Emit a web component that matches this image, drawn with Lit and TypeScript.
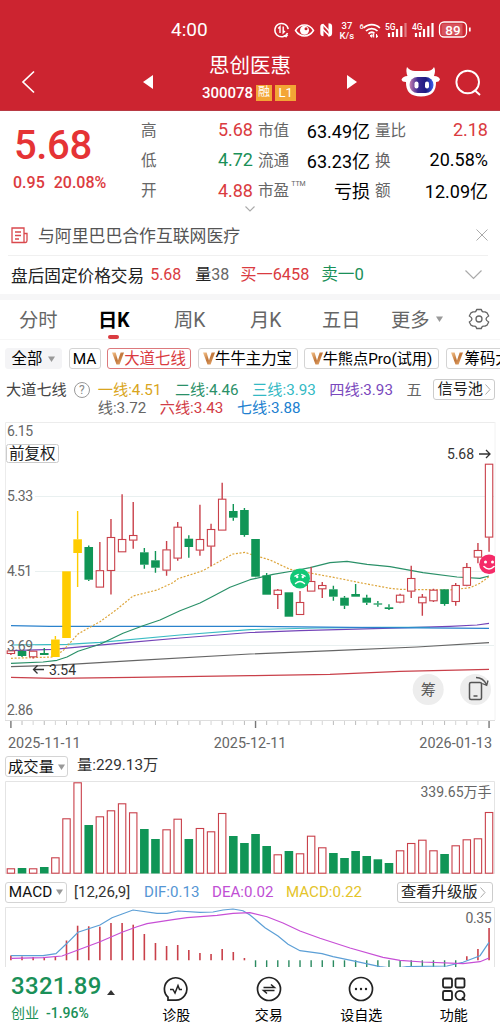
import { LitElement, html, svg, css } from "lit";
import { customElement } from "lit/decorators.js";

type Kind = "r" | "g" | "y";
// kind, body top, body bottom, high, low
type Candle = [Kind, number, number, number, number];

const X0 = 10.9;
const STEP = 11.12;
const cx = (i: number) => X0 + i * STEP;

const RED = "#c9404a";
const GREEN = "#109556";
const YELLOW = "#ffcc00";

const CANDLES: Candle[] = [
  ["r", 650.7, 653.7, 650, 655], ["g", 651, 656, 651, 657], ["r", 651, 657, 651, 658.5],
  ["g", 653, 655, 648, 655], ["y", 639.5, 657, 636, 657], ["y", 571.3, 638, 571.3, 638],
  ["y", 539.3, 553, 511, 587], ["g", 547, 579.7, 545.5, 581], ["r", 570.5, 587.3, 542, 587.3],
  ["r", 537.3, 570.7, 519, 594.5], ["r", 539.3, 552, 494.3, 552], ["r", 535.3, 540.3, 502, 548.7],
  ["g", 552.3, 564.7, 548, 568.7], ["g", 560.3, 567.7, 551, 572.7], ["r", 549.7, 570.3, 541, 575.7],
  ["r", 527, 558.3, 522, 560.7], ["g", 538.7, 547, 535.3, 557.7], ["r", 539.3, 550.3, 504.7, 555.7],
  ["r", 529.3, 546.3, 523.7, 566], ["r", 499, 530.3, 482.7, 530.3], ["g", 511, 517.7, 504, 520.7],
  ["g", 510, 535, 508, 536.7], ["g", 539, 576.7, 539, 577.3], ["g", 575.3, 594.7, 573, 594.7],
  ["r", 590, 594.7, 589, 609], ["g", 592.3, 616.7, 592.3, 616.7], ["r", 602.3, 614.7, 591, 614.7],
  ["r", 581.3, 591.3, 567, 591.3], ["r", 585.3, 589, 582, 598], ["g", 589.3, 596.7, 585.7, 600.7],
  ["g", 597.7, 605.7, 596, 609], ["g", 594, 596.7, 584, 596.7], ["g", 597.7, 602.7, 594.7, 605],
  ["g", 603.4, 604.6, 601, 606.7], ["g", 607.3, 609, 604.3, 610], ["r", 595, 602.3, 593.7, 603.3],
  ["r", 578.3, 591.3, 565.7, 598], ["r", 597, 603, 594, 615.7], ["r", 590, 601, 588.7, 602],
  ["g", 589.3, 604, 589, 605.7], ["r", 585.3, 601.7, 583, 605.7], ["r", 567.3, 585.5, 563, 586.3],
  ["r", 550.3, 557.3, 543, 563.3], ["r", 464, 537.3, 464, 551.7],
];

const VOLUME_TOPS = [
  868.3, 868, 868.3, 867, 857.3, 818.3, 782.3, 825, 816.3, 810.3, 803.3, 812.3, 829, 839, 829.3,
  818.7, 839, 828, 831.3, 813, 836, 843, 834, 846, 854.3, 851, 853.3, 835.7, 847.3, 853, 858, 851,
  856, 859.3, 863, 850.3, 843, 839.7, 850.3, 854, 845.3, 839.3, 838.3, 812,
];

const MACD_TOPS = [
  955.5, 956.5, 957, 957.5, 956.5, 940.5, 925.7, 926.3, 926.7, 923, 923, 924.7, 934, 943, 946, 945,
  950, 953, 954, 949, 952, 958,
];

const LINES: { color: string; d: string; dash?: boolean }[] = [
  { color: "#c9404a", d: "11,677.3 53,678.3 133,677.3 250,675.7 330,674.3 400,671.3 489,669.3" },
  { color: "#666", d: "11,666.7 53,665.3 133,660.7 250,654 333,650.7 417,647 489,642.7" },
  { color: "#7444b8", d: "11,650.7 53,649.3 83,646.7 127,642.7 180,638 250,632.5 300,630.7 383,628.3 450,626.3 477,625 489,623.3" },
  { color: "#3bbcc4", d: "11,645 67,644.3 100,642.3 180,635 250,629.6 317,628 383,627.3 430,627.3" },
  { color: "#2b82cc", d: "11,625.7 50,626.3 250,626.3 350,627.3 489,628.3" },
  { color: "#2a9068", d: "11,663.3 43,662 57,660.3 67,657 78,651.3 100,644.3 123,633.3 143,625.7 160,620 180,610.7 200,603 213,596.3 230,587.3 250,579.7 273,574.3 293,571 310,567.7 330,562.7 347,561.3 367,564.3 390,566.7 423,572.7 457,577 480,578.3 489,576" },
  { color: "#dda53a", dash: true, d: "11,658.3 53,657 63,650.7 78,634 100,621.7 117,609.3 133,596 157,590 173,582.7 178,578.7 203,570.7 222,560 233,554 245,552.3 250,554 270,560 290,569.3 310,573 337,578 360,582.7 390,588.3 400,589.3 450,590 470,587.7 480,583.3 489,576.7" },
];

const DIF = "11,955.7 43,955.7 56,953.7 67,943.3 78,932.3 100,925 112,917.7 133,910 157,913.3 167,913.3 178,911 200,912.3 213,912 223,910 233,909 243,910.7 250,915 265,927.7 278,936 288,944.3 300,950.7 322,953.7 333,956.7 357,961.7 380,966.7 395,968.5 407,966.5 447,966 463,962.3 480,955.7 489,942.3";
const DEA = "11,958.3 43,957.7 62,956 78,950 100,941.7 122,932.3 137,926.7 147,923.7 173,919.7 187,917.7 217,915.3 233,913.3 250,912.7 267,916.7 283,923 300,931 320,938.3 350,948 383,957.3 400,960.3 423,962 463,963.7 480,961.7 489,958";

const arrow = html`<svg class="dn" width="7" height="6" viewBox="0 0 7 6"><path d="M0 .5h7L3.5 6z" fill="#999" /></svg>`;

const vmark = html`<svg width="12" height="13" viewBox="0 0 12 13">
  <defs>
    <linearGradient id="v" x1="0" y1="0" x2="1" y2="1">
      <stop offset="0" stop-color="#f6c48c" /><stop offset=".5" stop-color="#c0763a" /><stop offset="1" stop-color="#f0b478" />
    </linearGradient>
  </defs>
  <path d="M0 .5h3.6L6 8.5 8.6.5H12L7.6 12.5H4.5z" fill="url(#v)" />
</svg>`;

@customElement("status-icons")
class StatusIcons extends LitElement {
  static styles = css`
    :host { display: block; }
    svg { display: block; }
    text { font-family: Roboto, sans-serif; fill: #fff; font-weight: 500; }
  `;
  render() {
    return html`<svg width="200" height="26" viewBox="272 16.500 200 26" fill="none" stroke="#fff">
      <path d="M287.600 32.600a6.700 6.700 0 1 1 .600-4" stroke-width="1.500" />
      <path d="M280 32.500v-6.300l-1.800 1.800M283.200 26v6.300l1.800-1.800" stroke-width="1.400" />
      <path d="M283.500 34.500h4.800l-2.200 2.800z" fill="#fff" stroke="none" />
      <path d="M295.500 30c4.500-7.200 13.500-7.200 18 0-4.500 7.200-13.500 7.200-18 0z" stroke-width="1.500" />
      <circle cx="304.500" cy="29.700" r="4.500" fill="#fff" stroke="none" />
      <circle cx="306" cy="28.200" r="1.500" fill="#cc2430" stroke="none" />
      <path d="M323.500 23.300q-3.200 0-3.200 3v6.500q0 3 3.200 3zM328.500 22.800q3.600 0 3.600 3v7q0 3-3.600 3.500z" fill="#fff" stroke="none" />
      <path d="M323 24l7 7.500v4M323 29l6.500 6.500" stroke-width="1.600" />
      <text x="341.500" y="28" font-size="9.500" stroke="none">37</text>
      <text x="339.500" y="38" font-size="9.500" stroke="none">K/s</text>
      <text x="359.500" y="28" font-size="7.500" stroke="none">6</text>
      <g stroke-width="1.700">
        <path d="M363.600 27.500a11.500 11.500 0 0 1 16.300 0" />
        <path d="M366 30.500a8 8 0 0 1 11.500 0" />
        <path d="M368.500 33.300a4.500 4.500 0 0 1 6-.4" />
      </g>
      <path d="M370 35.300l2-1 0 2.500zM373.700 37v-3.500l-1.200 1.300M376.500 33.500v3.500l1.500-1.300" stroke-width="1" fill="#fff" />
      <text x="385" y="29" font-size="8.500" stroke="none">5G</text>
      <g stroke-width="2.200">
        <path d="M389 36.500v-4M393 36.500v-5M397 36.500v-8M401.300 36.500v-11" />
        <path d="M405.500 36.500v-14" stroke="#e07c83" />
      </g>
      <text x="412" y="29" font-size="8.500" stroke="none">4G</text>
      <path d="M416 36.500v-4M420 36.500v-5M424 36.500v-8M428.300 36.500v-11M432.500 36.500v-14" stroke-width="2.200" />
      <rect x="439.500" y="21.500" width="27" height="15" rx="4.500" stroke-width="1.300" />
      <path d="M441.500 24q0-1 1-1h20v12h-20q-1 0-1-1z" fill="#e07c83" stroke="none" opacity=".55" />
      <path d="M469.800 27v4" stroke-width="1.700" />
      <text x="445.300" y="34" font-size="13.500" font-weight="700" stroke="none">89</text>
    </svg>`;
  }
}

@customElement("price-chart")
class PriceChart extends LitElement {
  static styles = css`
    :host { display: block; }
    svg { display: block; }
    text { font-family: Roboto, "Noto Sans CJK SC", sans-serif; font-size: 14px; fill: #666; }
    .dark { fill: #333; }
    .tag { font-size: 15.500px; fill: #222; }
    .chip { font-size: 15px; fill: #555; }
  `;
  render() {
    return html`<svg width="500" height="313" viewBox="0 420 500 313">
      <path d="M5.500 720.500V422.500H495" fill="none" stroke="#ececec" />
      <path d="M495 422v298" stroke="#f2f2f2" />
      <path d="M35 496.500H494M35 571.500H494M35 645.500H494" stroke="#e9f0f0" />
      <path d="M5 720.500H495" stroke="#dedede" />
      ${CANDLES.map((_, i) => {
        const major = i === 0 || i === 22 || i === 43;
        return svg`<line x1=${cx(i)} x2=${cx(i)} y1="721" y2=${major ? 728 : 725} stroke=${major ? "#777" : i % 2 ? "#bbb" : "#d5d5d5"} stroke-width=${major ? 1.4 : 1} />`;
      })}
      <rect x="6.500" y="444.500" width="52" height="18" rx="2" fill="#fff" stroke="#ccc" />
      <text class="tag" x="9" y="458.500">前复权</text>
      <text x="7" y="436" textLength="26">6.15</text>
      <text x="7" y="501" textLength="26">5.33</text>
      <text x="7" y="576" textLength="25">4.51</text>
      <text x="7" y="715" textLength="26">2.86</text>
      ${LINES.map((l) => svg`<polyline points=${l.d} fill="none" stroke=${l.color} stroke-width="1.200" stroke-linejoin="round" stroke-dasharray=${l.dash ? "2 1.600" : "none"} />`)}
      ${CANDLES.map(([k, top, bot, hi, lo], i) => {
        const x = cx(i);
        const c = k === "r" ? RED : k === "g" ? GREEN : YELLOW;
        return svg`<path d=${`M${x} ${hi}V${top}M${x} ${bot}V${lo}`} stroke=${c} stroke-width="1.400" />
          ${k === "r"
            ? svg`<rect x=${x - 3.7} y=${top + 0.2} width="7.400" height=${Math.max(bot - top - 0.4, 2)} fill="#fff" stroke=${c} stroke-width="1.100" />`
            : svg`<rect x=${x - 4.3} y=${top} width="8.600" height=${bot - top} fill=${c} />`}`;
      })}
      <text x="7" y="650.500" textLength="26">3.69</text>
      <text class="dark" x="49" y="675" textLength="27">3.54</text>
      <path d="M44 669.500H33.500M37.500 665.500l-4 4 4 4" fill="none" stroke="#333" stroke-width="1.300" />
      <text class="dark" x="447" y="459" textLength="27">5.68</text>
      <path d="M479 454h11M486 450l4 4-4 4" fill="none" stroke="#333" stroke-width="1.300" />
      <circle cx="300" cy="578.500" r="10" fill="#12c877" />
      <path d="M295 576.200l3.200-1.700M305 576.200l-3.200-1.700M295.500 583.500q4.500-4.200 9 0" fill="none" stroke="#fff" stroke-width="1.400" stroke-linecap="round" />
      <circle cx="297.200" cy="577" r="1.200" fill="#fff" /><circle cx="302.800" cy="577" r="1.200" fill="#fff" />
      <svg x="478" y="553" width="17" height="23" viewBox="478 553 17 23">
        <circle cx="489" cy="564.300" r="9.800" fill="#f52b68" />
        <circle cx="485.500" cy="562" r="1.500" fill="#fff" /><circle cx="492.500" cy="562" r="1.500" fill="#fff" />
        <path d="M484 566.500q5 5 10 0" fill="none" stroke="#fff" stroke-width="1.600" stroke-linecap="round" />
      </svg>
      <circle cx="428.200" cy="689.500" r="15.500" fill="#ededed" />
      <text class="chip" x="420.700" y="695">筹</text>
      <circle cx="475.500" cy="689.500" r="15.500" fill="#ededed" />
      <rect x="469.500" y="682.500" width="12" height="17" rx="1.500" fill="none" stroke="#555" stroke-width="1.500" />
      <path d="M473.500 696h4M476 677.500q7 0 10.500 7M488 680.500l-1.300 4.800-4.500-1.800" fill="none" stroke="#555" stroke-width="1.300" />
    </svg>`;
  }
}

@customElement("volume-chart")
class VolumeChart extends LitElement {
  static styles = css`
    :host { display: block; }
    svg { display: block; }
    text { font-family: Roboto, "Noto Sans CJK SC", sans-serif; font-size: 14px; fill: #666; }
  `;
  render() {
    return html`<svg width="500" height="95" viewBox="0 780 500 95">
      <path d="M5.500 874V781.500H494.500V874" fill="none" stroke="#e4e4e4" />
      <path d="M5 873.500H495" stroke="#f0e8e8" />
      ${VOLUME_TOPS.map((top, i) => {
        const x = cx(i);
        return CANDLES[i][0] === "g"
          ? svg`<rect x=${x - 4.3} y=${top} width="8.600" height=${873.5 - top} fill=${GREEN} />`
          : svg`<rect x=${x - 3.7} y=${top + 0.5} width="7.400" height=${872.7 - top} fill="#fff" stroke=${RED} stroke-width="1.100" />`;
      })}
      <text x="420.500" y="796.500" textLength="71">339.65万手</text>
    </svg>`;
  }
}

@customElement("macd-chart")
class MacdChart extends LitElement {
  static styles = css`
    :host { display: block; }
    svg { display: block; }
    text { font-family: Roboto, sans-serif; font-size: 14px; fill: #666; }
  `;
  render() {
    const tail: [number, number][] = [[41, 956.3], [42, 949], [43, 928]];
    return html`<svg width="500" height="61" viewBox="0 906 500 61">
      <path d="M5.500 967V907.500H494.500V967" fill="none" stroke="#e4e4e4" />
      ${MACD_TOPS.map((t, i) => svg`<line x1=${cx(i)} x2=${cx(i)} y1=${t} y2="960.300" stroke=${RED} stroke-width="1.600" />`)}
      ${tail.map(([i, t]) => svg`<line x1=${cx(i)} x2=${cx(i)} y1=${t} y2="960.300" stroke=${RED} stroke-width="1.600" />`)}
      ${Array.from({ length: 19 }, (_, k) => svg`<line x1=${cx(22 + k)} x2=${cx(22 + k)} y1="960.300" y2="967" stroke="#2a8a60" stroke-width="1.400" />`)}
      <polyline points=${DIF} fill="none" stroke="#5c9fd6" stroke-width="1.200" />
      <polyline points=${DEA} fill="none" stroke="#c74fd6" stroke-width="1.200" />
      <text x="465.500" y="922.500" textLength="26">0.35</text>
    </svg>`;
  }
}

@customElement("app-root")
class AppRoot extends LitElement {
  static styles = css`
    :host {
      display: flex; flex-direction: column; width: 500px; height: 1031px; overflow: hidden;
      background: #fff; color: #222; font-family: Roboto, "Noto Sans CJK SC", sans-serif;
      font-size: 15px; white-space: nowrap;
    }
    * { box-sizing: border-box; }
    svg { display: block; flex: none; }
    .red { color: #da3b40; } .green { color: #1a9058; } .black { color: #000; }
    .row { display: flex; align-items: center; flex: none; }

    .top { background: #cc2430; color: #fff; height: 110.500px; flex: none; border-bottom: 1px solid #b83a44; }
    .status { height: 46px; padding: 13px 0 0 171px; }
    .clock { width: 101px; font-size: 19px; }
    .bar { height: 64px; padding-left: 21px; }
    .back { margin-top: 7px; }
    .prev { margin-left: 108px; margin-top: 8px; }
    .title { width: 140px; margin-left: 27px; display: flex; flex-direction: column; align-items: center; margin-top: 2px; }
    .name { font-size: 20.500px; line-height: 28px; }
    .code { display: flex; align-items: center; gap: 3px; height: 26px; font-size: 15px; font-weight: 500; margin-left: -2px; }
    .badge { height: 15.500px; line-height: 15.500px; font-size: 12px; width: 16px; text-align: center; background: #f3a535; font-weight: 400; }
    .wide { width: 21px; font-size: 13px; }
    .next { margin-left: 27px; margin-top: 8px; }
    .bot { margin-left: 44px; margin-top: 7px; }
    .find { margin-left: 14px; margin-top: 9px; }

    .quote { height: 94px; align-items: flex-start; }
    .last { width: 141px; padding: 12px 0 0 14px; color: #e53335; }
    .price { font-size: 40px; line-height: 46px; font-weight: 500; letter-spacing: -.400px; height: 48px; }
    .chg { display: flex; gap: 9px; margin-left: -1px; font-size: 16px; line-height: 24px; font-weight: 500; color: #dc3b40; }
    .stats { display: grid; grid-template-columns: 112px 112px 113px; column-gap: 5px; grid-auto-rows: 30.300px; padding-top: 4px; }
    .cell { display: flex; justify-content: space-between; align-items: center; font-size: 18px; }
    .lab { font-size: 15.600px; color: #666; display: flex; margin-top: -2px; }
    .sup { font-size: 7px; line-height: 12px; margin-left: 2px; }
    .more { height: 8px; padding-left: 245px; }

    .news { height: 42px; padding: 3px 12px 0 11px; font-size: 16.850px; color: #555; }
    .news span { margin-left: 10px; flex: 1; margin-top: -1px; }
    .rule { height: 1px; background: #f0f0f0; margin: 0 12px 0 8px; flex: none; }
    .after { height: 38px; padding-left: 11px; font-size: 16.650px; }
    .after span { line-height: 24px; }
    .after i { font-style: normal; color: #222; }
    .after .a { margin-left: 6px; width: 45px; padding-top: 1px; font-size: 16px; } .after .b { width: 45px; color: #666; font-size: 16px; } .after .c { width: 81px; font-size: 16.300px; } .after .d { width: 144px; }
    .band { height: 6px; background: #f6f6f7; flex: none; }

    .tabs { height: 40px; color: #666; font-size: 19.300px; padding-left: 19px; border-bottom: 1px solid #f6f6f6; }
    .tabs div { line-height: 41px; height: 39px; }
    .on { color: #000; font-weight: 700; display: flex; flex-direction: column; }
    .tabs .mark { width: 11px; height: 4px; border-radius: 2px; background: #da3b40; margin: -6px 0 0 10px; flex: none; }
    .tabs .t0 { width: 79px; } .tabs .t1 { width: 76px; } .tabs .t2 { width: 76px; } .tabs .t3 { width: 72px; } .tabs .t4 { width: 69px; } .tabs .t5 { width: 45px; }
    .gear { margin-left: 25px; }

    .chips { height: 37px; padding: 1px 0 0 5px; gap: 6.500px; font-size: 15.400px; color: #000; overflow: hidden; width: 500px; }
    .chip { height: 21px; border: 1px solid #d4d4d4; border-radius: 3px; display: flex; align-items: center; justify-content: center; flex: none; line-height: 20px; }
    .all { width: 57px; background: #f4f4f6; border-color: #f4f4f6; gap: 6px; }
    .ma { width: 32px; } .c1 { width: 84px; color: #da3b40; border-color: #dd7a7d; } .c2 { width: 100px; } .c3 { width: 135px; font-size: 15.200px; } .c4 { width: 70px; justify-content: flex-start; padding-left: 4px; }
    .c4 svg { margin-right: 2px; }

    .lines { height: 43px; padding: 3px 5px 0 6px; font-size: 15.200px; align-items: flex-start; line-height: 20px; color: #444; }
    .help { width: 16px; height: 16px; border: 1px solid #999; border-radius: 50%; font-size: 12px; line-height: 14px; text-align: center; margin: 2px 8px 0 7px; color: #888; }
    .vals { flex: 1; line-height: 18.500px; padding-top: 1px; }
    .vals div { display: flex; gap: 13.500px; }
    .btn { height: 21px; border: 1px solid #ccc; border-radius: 3px; display: flex; align-items: center; gap: 2px; padding: 0 3px; line-height: 19px; color: #222; }
    .lines .btn { margin-top: -1px; }
    .l1 { color: #d9a520; } .l2 { color: #2a9068; } .l3 { color: #33b9c4; } .l4 { color: #7a48bd; } .l5 { color: #666; } .l6 { color: #d23c46; } .l7 { color: #217fd0; }

    .dates { height: 21px; padding: 1px 8px 0; justify-content: space-between; font-size: 14.400px; color: #666; }
    .head { height: 26px; padding: 0 7px 0 5px; font-size: 15.300px; color: #333; }
    .head .chip { color: #111; gap: 4px; }
    .vol { width: 63px; margin-right: 9px; } .mc { width: 62px; margin-right: 7px; }
    .qty { line-height: 20px; margin-top: -3px; }
    .head .btn { margin-left: auto; width: 96px; }
    .mh { height: 31px; padding-top: 4px; }
    .p0 { width: 70px; color: #333; } .p1 { width: 68px; color: #5596d4; } .p2 { width: 74px; color: #c04fd4; } .p3 { color: #e4c42a; }
    .mh span { font-size: 15.100px; }

    .nav { height: 64px; background: #fff; align-items: flex-start; flex: none; }
    .idx { width: 130px; padding: 4px 0 0 11px; color: #1a9058; }
    .big { display: flex; align-items: center; gap: 5px; font-size: 24px; line-height: 30px; font-weight: 500; letter-spacing: .300px; }
    .tri { margin-top: 13px; }
    .sm { font-size: 14px; line-height: 25px; display: flex; gap: 7px; font-weight: 500; }
    .sm span:first-child { font-weight: 400; }
    .item { width: 92.600px; display: flex; flex-direction: column; align-items: center; padding-top: 9px; font-size: 14px; line-height: 20px; gap: 3px; color: #000; }
  `;
  render() {
    const chev = html`<svg width="6" height="11" viewBox="0 0 6 11"><path d="M.5.5l4.500 5-4.500 5" fill="none" stroke="#aaa" /></svg>`;
    const cell = (l: unknown, v: string, c: string) => html`<div class="cell"><span class="lab">${l}</span><span class=${c}>${v}</span></div>`;
    return html`
      <header class="top">
        <div class="row status"><div class="clock">4:00</div><status-icons></status-icons></div>
        <div class="row bar">
          <svg class="back" width="14" height="24" viewBox="0 0 14 24"><path d="M13 1.500L2 12l11 10.500" fill="none" stroke="#fff" stroke-width="1.700" /></svg>
          <svg class="prev" width="10" height="14" viewBox="0 0 10 14"><path d="M10 0v14L0 7z" fill="#fff" /></svg>
          <div class="title">
            <div class="name">思创医惠</div>
            <div class="code">300078<span class="badge">融</span><span class="badge wide">L1</span></div>
          </div>
          <svg class="next" width="10" height="14" viewBox="0 0 10 14"><path d="M0 0v14l10-7z" fill="#fff" /></svg>
          <svg class="bot" width="39" height="32" viewBox="401 65 39 32">
            <defs><linearGradient id="face"><stop offset="0" stop-color="#c77fb0" /><stop offset=".35" stop-color="#3a2890" /><stop offset=".7" stop-color="#1c1a80" /><stop offset="1" stop-color="#3c5ff0" /></linearGradient></defs>
            <path d="M407 66q3 4 8 4h12q5 0 7-4 2 3 0 9 5 0 6 3.500-1 2.500-4 2.500.500 14.500-15 14.500T406 81q-4 0-4.500-2.500Q403 75 407.500 75q-2-5-.5-9z" fill="#fff" />
            <rect x="409.500" y="76" width="24" height="16" rx="8" fill="url(#face)" />
            <rect x="414.500" y="80.500" width="4" height="7" rx="2" fill="#fff" /><rect x="425" y="80.500" width="4" height="7" rx="2" fill="#fff" />
          </svg>
          <svg class="find" width="28" height="28" viewBox="0 0 28 28" fill="none" stroke="#fff" stroke-width="1.900"><circle cx="13.700" cy="13" r="11.300" /><path d="M20.500 21l5.500 5" /></svg>
        </div>
      </header>

      <section class="row quote">
        <div class="last"><div class="price">5.68</div><div class="chg"><span>0.95</span><span>20.08%</span></div></div>
        <div class="stats">
          ${cell("高", "5.68", "red")}${cell("市值", "63.49亿", "black")}${cell("量比", "2.18", "red")}
          ${cell("低", "4.72", "green")}${cell("流通", "63.23亿", "black")}${cell("换", "20.58%", "black")}
          ${cell("开", "4.88", "red")}${cell(html`市盈<span class="sup">TTM</span>`, "亏损", "black")}${cell("额", "12.09亿", "black")}
        </div>
      </section>
      <div class="row more"><svg width="10" height="6" viewBox="0 0 10 6"><path d="M.5.5L5 5 9.500.5" fill="none" stroke="#aaa" stroke-width="1.100" /></svg></div>

      <div class="row news">
        <svg width="17" height="17" viewBox="0 0 17 17" fill="none" stroke="#d9484d" stroke-width="1.300"><path d="M13 15.500V1H1v14.500h13.500q1.500 0 1.500-2V6.500h-3M4 5h6M4 8.500h6M4 12h4" /></svg>
        <span>与阿里巴巴合作互联网医疗</span>
        <svg width="12" height="12" viewBox="0 0 12 12"><path d="M.5.5l11 11M11.500.5l-11 11" stroke="#aaa" /></svg>
      </div>
      <div class="rule"></div>
      <div class="row after">
        盘后固定价格交易<span class="a red">5.68</span><span class="b"><i>量</i>38</span><span class="c red">买一6458</span><span class="d green">卖一0</span>
        <svg width="17" height="10" viewBox="0 0 17 10"><path d="M.5.5l8 8 8-8" fill="none" stroke="#aaa" stroke-width="1.200" /></svg>
      </div>
      <div class="band"></div>

      <nav class="row tabs">
        <div class="t0">分时</div><div class="t1 on">日K<span class="mark"></span></div><div class="t2">周K</div><div class="t3">月K</div><div class="t4">五日</div><div class="t5">更多</div>
        ${arrow}
        <svg class="gear" width="22" height="22" viewBox="0 0 22 22" fill="none" stroke="#666" stroke-width="1.300" stroke-linejoin="round">
          <path d="M8.700 1.500h4.600q.7 3 3.700 2.300l2 1 1.700 3.200q-2.700 1.500-2.700 3t2.700 3L19 17.200l-2 1q-3-.7-3.700 2.300H8.700q-.7-3-3.700-2.300l-2-1L1.300 14Q4 12.500 4 11T1.300 8L3 4.800l2-1q3 .7 3.700-2.300z" /><circle cx="11" cy="11" r="3" />
        </svg>
      </nav>

      <div class="row chips">
        <div class="chip all">全部${arrow}</div><div class="chip ma">MA</div>
        <div class="chip c1">${vmark}大道七线</div><div class="chip c2">${vmark}牛牛主力宝</div>
        <div class="chip c3">${vmark}牛熊点Pro(试用)</div><div class="chip c4">${vmark}筹码大</div>
      </div>

      <div class="row lines">
        大道七线<span class="help">?</span>
        <div class="vals">
          <div><span class="l1">一线:4.51</span><span class="l2">二线:4.46</span><span class="l3">三线:3.93</span><span class="l4">四线:3.93</span><span class="l5">五</span></div>
          <div><span class="l5">线:3.72</span><span class="l6">六线:3.43</span><span class="l7">七线:3.88</span></div>
        </div>
        <div class="btn">信号池${chev}</div>
      </div>

      <price-chart></price-chart>
      <div class="row dates"><span>2025-11-11</span><span>2025-12-11</span><span>2026-01-13</span></div>
      <div class="row head"><div class="chip vol">成交量${arrow}</div><span class="qty">量:229.13万</span></div>
      <volume-chart></volume-chart>
      <div class="row head mh">
        <div class="chip mc">MACD${arrow}</div><span class="p0">[12,26,9]</span><span class="p1">DIF:0.13</span><span class="p2">DEA:0.02</span><span class="p3">MACD:0.22</span>
        <div class="btn">查看升级版${chev}</div>
      </div>
      <macd-chart></macd-chart>

      <footer class="row nav">
        <div class="idx">
          <div class="big">3321.89<svg class="tri" width="8" height="5" viewBox="0 0 8 5"><path d="M0 5h8L4 0z" fill="#333" /></svg></div>
          <div class="sm"><span>创业</span><span>-1.96%</span></div>
        </div>
        <div class="item"><svg width="26" height="26" viewBox="0 0 26 26" fill="none" stroke="#222" stroke-width="1.700"><path d="M5 24.200V21.200A11.200 11.200 0 1 1 13 24.200z" /><path d="M7 13.500h3l2 3.500 3-7.500 1.500 4H19" stroke-width="1.500" /></svg>诊股</div>
        <div class="item"><svg width="26" height="26" viewBox="0 0 26 26" fill="none" stroke="#222" stroke-width="1.700"><circle cx="13" cy="13" r="11.500" /><path d="M7.500 11.500h11l-3.500-3M18.500 14.500h-11l3.500 3" stroke-width="1.500" /></svg>交易</div>
        <div class="item"><svg width="26" height="26" viewBox="0 0 26 26" fill="#222"><circle cx="13" cy="13" r="11.500" fill="none" stroke="#222" stroke-width="1.700" /><circle cx="8" cy="13" r="1.200" /><circle cx="13" cy="13" r="1.200" /><circle cx="18" cy="13" r="1.200" /></svg>设自选</div>
        <div class="item"><svg width="26" height="26" viewBox="0 0 26 26" fill="none" stroke="#222" stroke-width="1.800"><rect x="2" y="2.500" width="9" height="9" rx="1.500" /><rect x="14.500" y="2.500" width="9" height="9" rx="1.500" /><rect x="2" y="15" width="9" height="9" rx="1.500" /><circle cx="19" cy="19.300" r="4.500" /><path d="M21 21.500l3 3" /></svg>功能</div>
      </footer>
    `;
  }
}
